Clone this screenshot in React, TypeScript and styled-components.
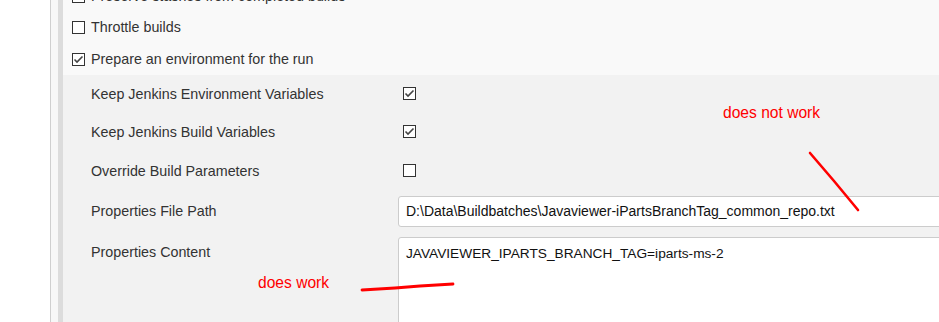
import React from "react";
import styled, { createGlobalStyle } from "styled-components";

const Global = createGlobalStyle`
  html, body { margin: 0; padding: 0; background: #fff; overflow: hidden; }
  body { font-family: "Liberation Sans", Arial, sans-serif; color: #333; }
`;

const Page = styled.div`
  position: relative;
  display: flex;
  width: 939px;
  height: 322px;
  overflow: hidden;
`;

const Gutter = styled.div`
  width: 50px;
  flex: none;
  background: #fff;
`;

const Panel = styled.div`
  flex: 1;
  display: flex;
  border-left: 1px solid #cfcfcf;
  min-width: 0;
`;

const Strip = styled.div`
  width: 7px;
  flex: none;
  background: #f7f7f7;
`;

const Bar = styled.div`
  width: 5px;
  flex: none;
  background: #dcdcdc;
`;

const Content = styled.div`
  flex: 1;
  min-width: 0;
  display: flex;
  flex-direction: column;
`;

const TopSection = styled.div`
  background: #f9f9f9;
  margin-top: -19px;
  padding-left: 9px;
`;

const OptionRow = styled.label<{ $h?: number }>`
  display: flex;
  align-items: center;
  gap: 6px;
  height: ${(p) => p.$h ?? 32}px;
  font-size: 14.3px;
`;

const Nested = styled.div`
  flex: 1;
  background: #f2f2f2;
  display: grid;
  grid-template-columns: 307px 1fr;
  grid-auto-rows: auto;
  padding-left: 28px;
  align-content: start;
`;

const Label = styled.div<{ $h: number; $top?: boolean }>`
  height: ${(p) => p.$h}px;
  display: flex;
  align-items: ${(p) => (p.$top ? "flex-start" : "center")};
  padding-top: ${(p) => (p.$top ? 12 : 0)}px;
  box-sizing: border-box;
  font-size: 14.3px;
  white-space: nowrap;
`;

const Control = styled.div<{ $h: number; $top?: boolean }>`
  height: ${(p) => p.$h}px;
  display: flex;
  align-items: ${(p) => (p.$top ? "flex-start" : "center")};
  padding-top: ${(p) => (p.$top ? 5 : 0)}px;
  padding-left: 5px;
  box-sizing: border-box;
  min-width: 0;
`;

const Box = styled.span`
  width: 13px;
  height: 13px;
  flex: none;
  box-sizing: border-box;
  border: 1px solid #333;
  background: #fff;
  display: inline-flex;
  align-items: center;
  justify-content: center;
`;

const TextField = styled.div<{ $h: number; $size: number }>`
  margin-left: -5px;
  width: 620px;
  flex: none;
  height: ${(p) => p.$h}px;
  box-sizing: border-box;
  border: 1px solid #cccccc;
  border-radius: 3px;
  background: #fff;
  padding: 0 7px;
  font-size: ${(p) => p.$size}px;
  color: #111;
  display: flex;
  align-items: flex-start;
  white-space: nowrap;
`;

const InputText = styled.span<{ $pad: number }>`
  padding-top: ${(p) => p.$pad}px;
`;

const Note = styled.div<{ $x: number; $y: number }>`
  position: absolute;
  left: ${(p) => p.$x}px;
  top: ${(p) => p.$y}px;
  color: #f00;
  font-size: 15.6px;
  font-family: "Liberation Sans", Arial, sans-serif;
  white-space: nowrap;
`;

const Ink = styled.svg`
  position: absolute;
  left: 0;
  top: 0;
  pointer-events: none;
`;

function Check({ checked }: { checked: boolean }) {
  return (
    <Box>
      {checked && (
        <svg width="11" height="11" viewBox="0 0 11 11">
          <path d="M1.5 5.5 L4 8 L9.5 2.5" fill="none" stroke="#444" strokeWidth="1.6" />
        </svg>
      )}
    </Box>
  );
}

export default function App() {
  return (
    <>
      <Global />
      <Page>
        <Gutter />
        <Panel>
          <Strip />
          <Bar />
          <Content>
            <TopSection>
              <OptionRow $h={30}><Check checked={false} />Preserve stashes from completed builds</OptionRow>
              <OptionRow><Check checked={false} />Throttle builds</OptionRow>
              <OptionRow><Check checked={true} />Prepare an environment for the run</OptionRow>
            </TopSection>
            <Nested>
              <Label $h={37}>Keep Jenkins Environment Variables</Label>
              <Control $h={37}><Check checked={true} /></Control>
              <Label $h={39}>Keep Jenkins Build Variables</Label>
              <Control $h={39}><Check checked={true} /></Control>
              <Label $h={39}>Override Build Parameters</Label>
              <Control $h={39}><Check checked={false} /></Control>
              <Label $h={42}>Properties File Path</Label>
              <Control $h={42}>
                <TextField $h={31} $size={14}><InputText $pad={6}>D:\Data\Buildbatches\Javaviewer-iPartsBranchTag_common_repo.txt</InputText></TextField>
              </Control>
              <Label $h={100} $top>Properties Content</Label>
              <Control $h={100} $top>
                <TextField $h={110} $size={13.7}><InputText $pad={8}>JAVAVIEWER_IPARTS_BRANCH_TAG=iparts-ms-2</InputText></TextField>
              </Control>
            </Nested>
          </Content>
        </Panel>
        <Note $x={723} $y={104}>does not work</Note>
        <Note $x={258} $y={274}>does work</Note>
        <Ink width="939" height="322" viewBox="0 0 939 322">
          <path d="M810 153 L834 181 L858 210" fill="none" stroke="#f00" strokeWidth="2.6" strokeLinecap="round" />
          <path d="M362 290 L395 288 L420 286 L453 284" fill="none" stroke="#f00" strokeWidth="2.8" strokeLinecap="round" />
        </Ink>
      </Page>
    </>
  );
}
